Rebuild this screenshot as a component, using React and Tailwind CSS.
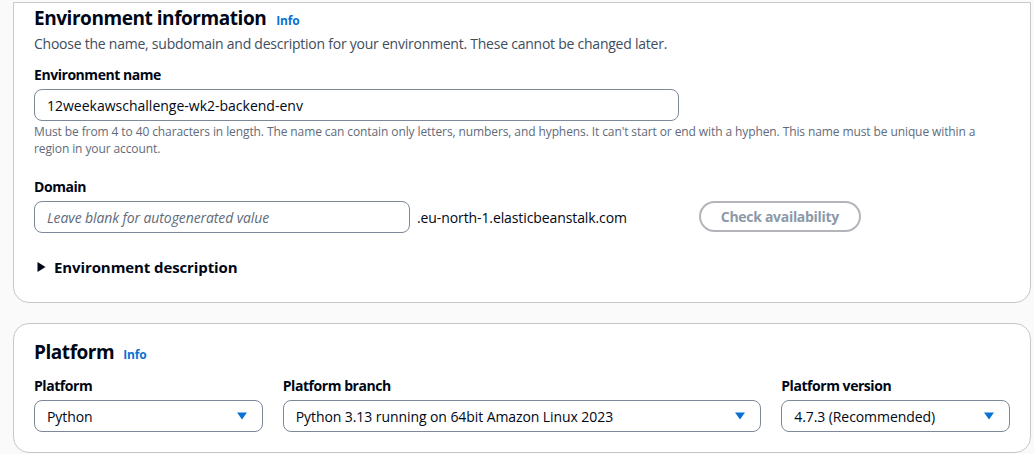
const FONT = { fontFamily: '"Open Sans", "Noto Sans", sans-serif' }

function Info({ className = '' }) {
  return <span className={`text-[12px] font-bold text-[#0972d3] tracking-[-0.2px] ${className}`}>Info</span>
}

function Label({ children }) {
  return <div className="text-[14px] leading-5 font-bold text-[#000716] tracking-[-0.45px]">{children}</div>
}

function Caret() {
  return (
    <svg width="12" height="8" viewBox="0 0 12 8" className="shrink-0">
      <path d="M1 0.5 L11 0.5 L6 7.5 Z" fill="#0972d3" />
    </svg>
  )
}

function Select({ value, className = '' }) {
  return (
    <div className={`h-8 rounded-lg border border-[#7d8998] bg-white flex items-center justify-between pl-3 pr-[14px] ${className}`}>
      <span className="text-[14px] text-[#000716] tracking-[-0.08px]">{value}</span>
      <Caret />
    </div>
  )
}

export default function App() {
  return (
    <div className="w-[1034px] h-[454px] bg-[#fafafa] pl-[13px] pr-[3px] pt-[2px] overflow-hidden" style={FONT}>
      <div className="bg-white border border-[#c6c6cd] rounded-b-2xl pl-[20px] pt-[3px] pb-[23px]">
        <div className="flex items-baseline gap-[10px] h-6">
          <span className="text-[19px] leading-6 font-bold text-[#000716] tracking-[-0.45px]">Environment information</span>
          <Info />
        </div>
        <div className="mt-1 text-[14px] leading-5 text-[#414d5c] tracking-[-0.24px]">
          Choose the name, subdomain and description for your environment. These cannot be changed later.
        </div>

        <div className="mt-[11px]">
          <Label>Environment name</Label>
          <div className="mt-1 w-[645px] h-8 rounded-lg border border-[#7d8998] flex items-center px-3 text-[14px] text-[#000716]">
            12weekawschallenge-wk2-backend-env
          </div>
          <div className="mt-[2px] w-[960px] text-[12px] leading-[17px] text-[#5f6b7a] tracking-[-0.1px]">
            Must be from 4 to 40 characters in length. The name can contain only letters, numbers, and hyphens. It can't start or end with a hyphen. This name must be unique within a region in your account.
          </div>
        </div>

        <div className="mt-5">
          <Label>Domain</Label>
          <div className="mt-1 flex items-center">
            <div className="w-[376px] h-8 rounded-lg border border-[#7d8998] flex items-center px-3 text-[14px] italic text-[#5f6b7a] tracking-[-0.1px]">
              Leave blank for autogenerated value
            </div>
            <span className="ml-[7px] text-[14px] text-[#000716] tracking-[-0.1px]">.eu-north-1.elasticbeanstalk.com</span>
            <div className="ml-[72px] -mt-[2px] w-[162px] h-[31px] rounded-full border-2 border-[#b4b4bb] flex items-center justify-center text-[14px] font-bold text-[#8d99a8] tracking-[-0.3px]">
              Check availability
            </div>
          </div>
        </div>

        <div className="mt-[22px] flex items-center h-6 gap-[7px]">
          <svg width="10" height="12" viewBox="0 0 10 12" className="ml-[3px]">
            <path d="M0.5 1 L8.5 6 L0.5 11 Z" fill="#000716" />
          </svg>
          <span className="text-[15px] font-bold text-[#000716] tracking-[-0.1px]">Environment description</span>
        </div>
      </div>

      <div className="mt-[20px] bg-white border border-[#c6c6cd] rounded-2xl pl-[20px] pr-[20px] pt-[16px] pb-[20px]">
        <div className="flex items-baseline gap-[9px] h-6">
          <span className="text-[19px] leading-6 font-bold text-[#000716] tracking-[-0.45px]">Platform</span>
          <Info />
        </div>
        <div className="mt-3 flex gap-[20px]">
          <div className="w-[229px]">
            <Label>Platform</Label>
            <Select value="Python" className="mt-1" />
          </div>
          <div className="w-[479px]">
            <Label>Platform branch</Label>
            <Select value="Python 3.13 running on 64bit Amazon Linux 2023" className="mt-1" />
          </div>
          <div className="w-[229px]">
            <Label>Platform version</Label>
            <Select value="4.7.3 (Recommended)" className="mt-1" />
          </div>
        </div>
      </div>
    </div>
  )
}
